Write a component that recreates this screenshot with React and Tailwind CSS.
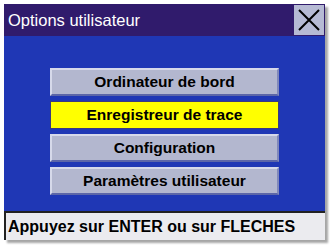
export default function App() {
  const items = [
    { label: "Ordinateur de bord", sel: false },
    { label: "Enregistreur de trace", sel: true },
    { label: "Configuration", sel: false },
    { label: "Paramètres utilisateur", sel: false },
  ];
  return (
    <div className="w-[332px] h-[248px] bg-white pt-[4px] pl-[4px]" style={{ fontFamily: '"Liberation Sans", Arial, sans-serif' }}>
      <div className="w-[321px] flex flex-col shadow-[3px_3px_2px_rgba(0,0,0,0.35)]">
        <div className="h-[32px] bg-[#301b6c] flex items-center justify-between pl-[4px] pr-[1px]">
          <span className="text-white text-[16.5px] leading-none">Options utilisateur</span>
          <div className="w-[30px] h-[30px] bg-[#b6bad4] flex items-center justify-center">
            <svg width="24" height="24" viewBox="0 0 24 24">
              <path d="M2 2 L22 22 M22 2 L2 22" stroke="#000" strokeWidth="2" fill="none" />
            </svg>
          </div>
        </div>
        <div className="h-[175px] bg-[#1f37b5] flex flex-col items-center pt-[32px] gap-[5px]">
          {items.map((it) => (
            <div
              key={it.label}
              className={
                it.sel
                  ? "w-[229px] h-[28px] bg-[#ffff00] border border-[#3a3a80] flex items-center justify-center text-[15.5px] font-bold text-black"
                  : "w-[229px] h-[28px] bg-[#b3b7cf] border-t-2 border-l-2 border-[#d6d9ea] border-b-2 border-r-2 border-b-[#5c66a8] border-r-[#8088bb] flex items-center justify-center text-[15.5px] font-bold text-black"
              }
            >
              {it.label}
            </div>
          ))}
        </div>
        <div className="h-[29px] bg-[#ebebef] border-t-2 border-l-2 border-[#222] flex items-center pl-[2px]">
          <span className="text-[16px] font-bold text-black">Appuyez sur ENTER ou sur FLECHES</span>
        </div>
      </div>
    </div>
  );
}
